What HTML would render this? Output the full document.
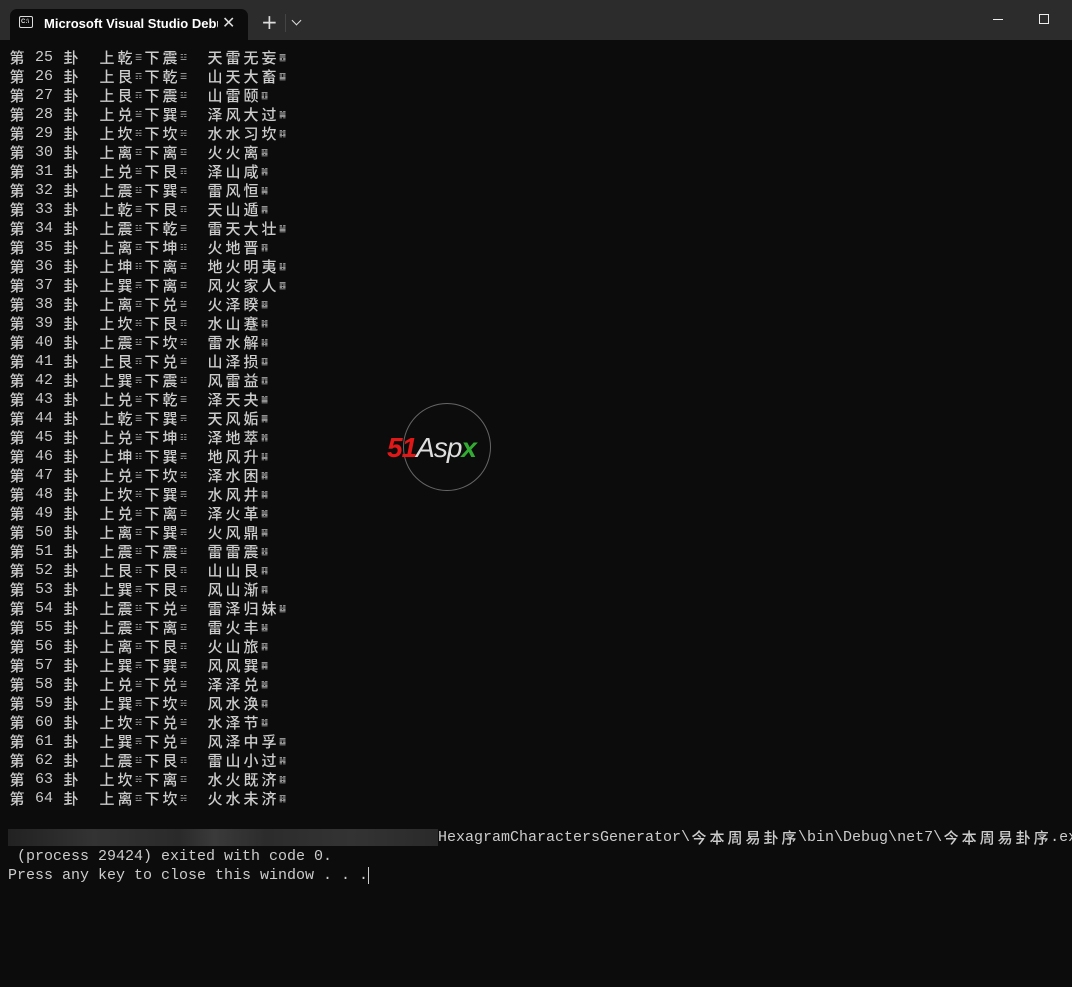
<!DOCTYPE html>
<html><head><meta charset="utf-8">
<style>
*{margin:0;padding:0;box-sizing:border-box}
body{width:1072px;height:987px;background:#0c0c0c;overflow:hidden;position:relative;color:#cccccc;font-family:"Liberation Mono","DejaVu Sans Mono",monospace;font-size:15px}
.bar{position:absolute;left:0;top:0;width:1072px;height:40px;background:#2c2c2c}
.tab{position:absolute;left:10px;top:9px;width:238px;height:31px;background:#0c0c0c;border-radius:7px 7px 0 0}
.tab .t{position:absolute;left:34px;top:7px;font:600 13px "Liberation Sans",sans-serif;color:#fff;width:174px;overflow:hidden;white-space:nowrap}
.tab .ic{position:absolute;left:9px;top:7px;width:14px;height:12px;border:1.3px solid #ddd;border-radius:2px;font:bold 6px "Liberation Sans";color:#ddd;padding:2px 0 0 1px}
.tab .x{position:absolute;left:212px;top:4px;font:16px "DejaVu Sans";color:#ddd}
.plus{position:absolute;left:261px;top:10px;font:20px "DejaVu Sans";color:#ddd}
.sep{position:absolute;left:285px;top:14px;width:1px;height:18px;background:#444}
.dd{position:absolute;left:293px;top:17px;width:7px;height:7px;border-right:1.3px solid #ddd;border-bottom:1.3px solid #ddd;transform:rotate(45deg)}
.min{position:absolute;left:993px;top:19px;width:10px;height:1px;background:#eee}
.max{position:absolute;left:1039px;top:14px;width:10px;height:10px;border:1px solid #eee}
.c{position:absolute;left:8px;top:48px}
.r{height:19px;line-height:19px;white-space:pre;display:flex}
.w{display:inline-block;width:18px;font-family:"Noto Sans CJK SC",sans-serif;font-size:15px;text-align:center;font-weight:500}
.n{display:inline-block;width:9px;font-family:"DejaVu Sans",sans-serif;font-size:8px;text-align:center;color:#bbb}
.s{white-space:pre}
.ln{position:absolute;left:8px;white-space:pre;height:19px;line-height:19px;display:flex}
.ln>*{flex-shrink:0}
.blur{display:inline-block;width:430px;height:17px;margin-top:1px;background:linear-gradient(90deg,#222 0,#2a2a2a 10%,#333 20%,#2a2a2a 40%,#3a3a3a 48%,#2c2c2c 60%,#333 80%,#2a2a2a 100%)}
</style></head><body>
<div class="bar"></div>
<div class="tab"><div class="ic">C:\</div><div class="t">Microsoft Visual Studio Debug</div><div class="x">✕</div></div>
<div class="plus">+</div><div class="sep"></div><div class="dd"></div>
<div class="min"></div><div class="max"></div>
<div class="c" id="c"></div>
<div class="ln" style="top:828px;width:1064px;overflow:hidden"><span class="blur"></span><span>HexagramCharactersGenerator\</span><span class="w">今</span><span class="w">本</span><span class="w">周</span><span class="w">易</span><span class="w">卦</span><span class="w">序</span><span>\bin\Debug\net7\</span><span class="w">今</span><span class="w">本</span><span class="w">周</span><span class="w">易</span><span class="w">卦</span><span class="w">序</span><span>.exe</span></div>
<div class="ln" style="top:847px"> (process 29424) exited with code 0.</div>
<div class="ln" style="top:866px">Press any key to close this window . . .<span style="display:inline-block;width:1px;height:17px;background:#ccc;margin-top:1px"></span></div>
<div style="position:absolute;left:403px;top:403px;width:88px;height:88px;border:1.5px solid #666;border-radius:50%"></div>
<div style="position:absolute;left:387px;top:432px;font:italic bold 28px 'Liberation Sans';letter-spacing:-1px"><span style="color:#e01818">51</span><span style="color:#ddd;font-weight:normal">Asp</span><span style="color:#3a3">x</span></div>
<script>
var T={乾:'☰',兑:'☱',离:'☲',震:'☳',巽:'☴',坎:'☵',艮:'☶',坤:'☷'};
var D="乾震天雷无妄|艮乾山天大畜|艮震山雷颐|兑巽泽风大过|坎坎水水习坎|离离火火离|兑艮泽山咸|震巽雷风恒|乾艮天山遁|震乾雷天大壮|离坤火地晋|坤离地火明夷|巽离风火家人|离兑火泽睽|坎艮水山蹇|震坎雷水解|艮兑山泽损|巽震风雷益|兑乾泽天夬|乾巽天风姤|兑坤泽地萃|坤巽地风升|兑坎泽水困|坎巽水风井|兑离泽火革|离巽火风鼎|震震雷雷震|艮艮山山艮|巽艮风山渐|震兑雷泽归妹|震离雷火丰|离艮火山旅|巽巽风风巽|兑兑泽泽兑|巽坎风水涣|坎兑水泽节|巽兑风泽中孚|震艮雷山小过|坎离水火既济|离坎火水未济".split('|');
var h='';
function w(c){return '<span class="w">'+c+'</span>'}
function n(c){return '<span class="n">'+c+'</span>'}
D.forEach(function(d,i){var k=25+i;var a=d[0],b=d[1],nm=d.slice(2);
var s=w('第')+'<span class="s"> '+k+' </span>'+w('卦')+'<span class="s">  </span>'+w('上')+w(a)+n(T[a])+w('下')+w(b)+n(T[b])+'<span class="s">  </span>';
for(var j=0;j<nm.length;j++)s+=w(nm[j]);
s+=n(String.fromCharCode(0x4DC0+k-1));
h+='<div class="r">'+s+'</div>';});
document.getElementById('c').innerHTML=h;
</script>
</body></html>
